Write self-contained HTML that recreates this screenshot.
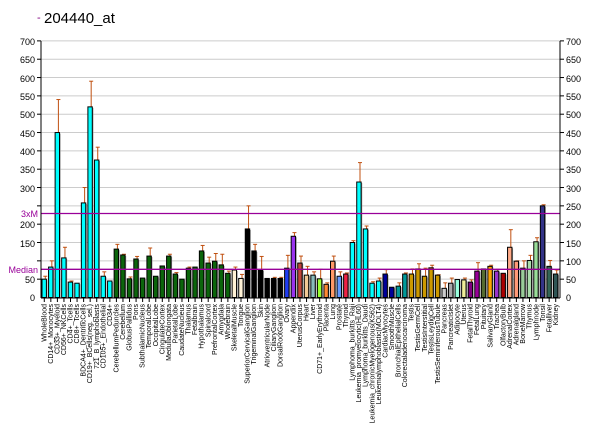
<!DOCTYPE html>
<html><head><meta charset="utf-8"><style>
html,body{margin:0;padding:0;background:#fff;}
svg{display:block;font-family:"Liberation Sans",sans-serif;}
.yl{font-size:9px;fill:#000;}
</style></head><body>
<svg id="s" width="600" height="434" viewBox="0 0 600 434" xmlns="http://www.w3.org/2000/svg" style="position:absolute;left:0;top:0">
<rect width="600" height="434" fill="#fff"/>
<text x="37" y="21" font-size="11" fill="#800080">-</text>
<text x="44" y="23" font-size="15" fill="#000">204440_at</text>
<g id="grid"></g>
<g id="bars"></g>
<line x1="41" y1="213.5" x2="560" y2="213.5" stroke="#990099" stroke-width="1.3"/>
<line x1="41" y1="269.3" x2="560" y2="269.3" stroke="#990099" stroke-width="1.3"/>
<line x1="41" y1="41" x2="41" y2="298" stroke="#000"/>
<line x1="560" y1="41" x2="560" y2="298" stroke="#000"/>
<line x1="41" y1="298" x2="560" y2="298" stroke="#000"/>
<g class="yl" text-anchor="end">
<text x="35" y="45">700</text><text x="35" y="63">650</text><text x="35" y="82">600</text><text x="35" y="100">550</text><text x="35" y="118">500</text><text x="35" y="137">450</text><text x="35" y="155">400</text><text x="35" y="173">350</text><text x="35" y="192">300</text><text x="35" y="228">200</text><text x="35" y="247">150</text><text x="35" y="283">50</text><text x="35" y="301">0</text>
</g>
<text x="38" y="217" font-size="9" fill="#990099" text-anchor="end">3xM</text>
<text x="38" y="273" font-size="9" fill="#990099" text-anchor="end">Median</text>
<g class="yl">
<text x="566" y="45">700</text><text x="566" y="63">650</text><text x="566" y="82">600</text><text x="566" y="100">550</text><text x="566" y="118">500</text><text x="566" y="137">450</text><text x="566" y="155">400</text><text x="566" y="173">350</text><text x="566" y="192">300</text><text x="566" y="210">250</text><text x="566" y="228">200</text><text x="566" y="247">150</text><text x="566" y="265">100</text><text x="566" y="283">50</text><text x="566" y="301">0</text>
</g>
</svg>
<script>
(function(){
var v=[50,83,450,108,42,39,258,520,375,58,45,132,116,51,105,53,113,58,86,113,64,50,80,83,127,94,99,89,66,75,52,187,127,75,52,52,52,80,167,94,61,61,51,36,99,58,64,150,315,187,39,45,64,28,31,64,64,78,58,81,61,25,39,49,48,42,72,78,85,72,66,137,99,80,101,152,250,85,64];
var e=[58,100,540,137,45,0,300,590,410,70,0,145,118,56,112,0,135,0,0,118,68,0,83,0,142,110,120,118,72,83,63,250,145,112,0,55,55,115,177,113,85,70,77,40,113,70,67,155,368,195,43,53,76,0,40,67,78,92,80,88,62,40,53,0,53,48,95,0,88,77,0,185,100,100,115,163,253,101,75];
var c=[],i;
for(i=0;i<11;i++)c.push("#00ffff");
for(i=0;i<18;i++)c.push("#0b650b");
c=c.concat(["#fff2d6","#fff2d6","#000","#000","#000","#000","#000","#000","#1f3cf0","#9933ee","#c0453a","#f2c996","#88bbbb","#99ff33","#ff8833","#ff9966","#6699ff","#ee2244","#00ffff","#00ffff","#00ffff","#00ffff","#00ffff","#000099","#000099","#009999","#009999","#cc9900","#cc9900","#cc9900","#cc9900","#cc9900","#cccccc","#aaaaaa","#99ffdd","#eeee99","#800080","#990099","#556b2f","#ffa500","#9933cc","#aa0000","#ffaa88","#ff9977","#99cc99","#aaddaa","#99dd99","#333388","#336655","#2f5555"]);
var ns="http://www.w3.org/2000/svg";
function el(t,a,p){var n=document.createElementNS(ns,t);for(var k in a)n.setAttribute(k,a[k]);p.appendChild(n);return n;}
var g=document.getElementById("grid");
function Y(val){return 297.5-val*0.3666;}
for(var k=1;k<=14;k++){var y=Y(k*50);el("line",{x1:41,x2:560,y1:y,y2:y,stroke:"#cccccc","stroke-width":1},g);
el("line",{x1:37,x2:41,y1:y,y2:y,stroke:"#000"},g);el("line",{x1:560,x2:564,y1:y,y2:y,stroke:"#000"},g);}
var b=document.getElementById("bars");
var w=518/79;
for(i=0;i<79;i++){
 var x0=41+i*w, cx=x0+w/2, ty=Y(v[i]);
 el("rect",{x:x0+2.5,y:ty+1,width:4,height:297.5-ty-1,fill:"#999"},b);
 if(e[i]>v[i]){var et=Y(e[i]);
  el("line",{x1:cx+1,x2:cx+1,y1:et,y2:ty,stroke:"#c05010","stroke-width":1},b);
  el("line",{x1:cx-1,x2:cx+3,y1:et,y2:et,stroke:"#c05010","stroke-width":1},b);}
 el("rect",{x:x0+1,y:ty,width:4.4,height:297.5-ty,fill:c[i],stroke:"#000","stroke-width":1},b);
 el("line",{x1:cx,x2:cx,y1:298,y2:302,stroke:"#000"},b);
}
})();
</script>
<div style="position:absolute;left:0;top:0;width:600px;height:434px;pointer-events:none">
<svg width="600" height="434" style="position:absolute;left:0;top:0" font-family="Liberation Sans, sans-serif" font-size="7" text-anchor="end">
<text transform="translate(46.3,304) rotate(-90)">WholeBlood</text>
<text transform="translate(52.8,304) rotate(-90)">CD14+_Monocytes</text>
<text transform="translate(59.4,304) rotate(-90)">CD33+_Myeloid</text>
<text transform="translate(66,304) rotate(-90)">CD56+_NKCells</text>
<text transform="translate(72.5,304) rotate(-90)">CD4+_Tcells</text>
<text transform="translate(79.1,304) rotate(-90)">CD8+_Tcells</text>
<text transform="translate(85.6,304) rotate(-90)">BDCA4+_DentriticCells</text>
<text transform="translate(92.2,304) rotate(-90)">CD19+_BCells(neg._sel.)</text>
<text transform="translate(98.8,304) rotate(-90)">721_B_lymphoblasts</text>
<text transform="translate(105.3,304) rotate(-90)">CD105+_Endothelial</text>
<text transform="translate(111.9,304) rotate(-90)">CD34+</text>
<text transform="translate(118.4,304) rotate(-90)">CerebellumPeduncles</text>
<text transform="translate(125,304) rotate(-90)">Cerebellum</text>
<text transform="translate(131.6,304) rotate(-90)">GlobusPallidus</text>
<text transform="translate(138.1,304) rotate(-90)">Pons</text>
<text transform="translate(144.7,304) rotate(-90)">SubthalamicNucleus</text>
<text transform="translate(151.2,304) rotate(-90)">TemporalLobe</text>
<text transform="translate(157.8,304) rotate(-90)">OccipitalLobe</text>
<text transform="translate(164.4,304) rotate(-90)">CingulateCortex</text>
<text transform="translate(170.9,304) rotate(-90)">MedullaOblongata</text>
<text transform="translate(177.5,304) rotate(-90)">ParietalLobe</text>
<text transform="translate(184,304) rotate(-90)">CaudateNucleus</text>
<text transform="translate(190.6,304) rotate(-90)">Thalamus</text>
<text transform="translate(197.2,304) rotate(-90)">Fetalbrain</text>
<text transform="translate(203.7,304) rotate(-90)">Hypothalamus</text>
<text transform="translate(210.3,304) rotate(-90)">Spinalcord</text>
<text transform="translate(216.8,304) rotate(-90)">PrefrontalCortex</text>
<text transform="translate(223.4,304) rotate(-90)">Amygdala</text>
<text transform="translate(230,304) rotate(-90)">Wholebrain</text>
<text transform="translate(236.5,304) rotate(-90)">SkeletalMuscle</text>
<text transform="translate(243.1,304) rotate(-90)">Tongue</text>
<text transform="translate(249.6,304) rotate(-90)">SuperiorCervicalGanglion</text>
<text transform="translate(256.2,304) rotate(-90)">TrigeminalGanglion</text>
<text transform="translate(262.8,304) rotate(-90)">Skin</text>
<text transform="translate(269.3,304) rotate(-90)">AtrioventricularNode</text>
<text transform="translate(275.9,304) rotate(-90)">CiliaryGanglion</text>
<text transform="translate(282.4,304) rotate(-90)">DorsalRootGanglion</text>
<text transform="translate(289,304) rotate(-90)">Ovary</text>
<text transform="translate(295.6,304) rotate(-90)">Appendix</text>
<text transform="translate(302.1,304) rotate(-90)">UterusCorpus</text>
<text transform="translate(308.7,304) rotate(-90)">Heart</text>
<text transform="translate(315.2,304) rotate(-90)">Liver</text>
<text transform="translate(321.8,304) rotate(-90)">CD71+_EarlyErythroid</text>
<text transform="translate(328.4,304) rotate(-90)">Placenta</text>
<text transform="translate(334.9,304) rotate(-90)">Lung</text>
<text transform="translate(341.5,304) rotate(-90)">Prostate</text>
<text transform="translate(348,304) rotate(-90)">Thyroid</text>
<text transform="translate(354.6,304) rotate(-90)">Lymphoma_burkitts_Raji</text>
<text transform="translate(361.2,304) rotate(-90)">Leukemia_promyelocytic(HL60)</text>
<text transform="translate(367.7,304) rotate(-90)">Lymphoma_burkitts_Daudi</text>
<text transform="translate(374.3,304) rotate(-90)">Leukemia_chronicMyelogenous(K562)</text>
<text transform="translate(380.8,304) rotate(-90)">Leukemialymphoblastic(MOLT4)</text>
<text transform="translate(387.4,304) rotate(-90)">CardiacMyocytes</text>
<text transform="translate(394,304) rotate(-90)">SmoothMuscle</text>
<text transform="translate(400.5,304) rotate(-90)">BronchialEpithelialCells</text>
<text transform="translate(407.1,304) rotate(-90)">Colorectaladenocarcinoma</text>
<text transform="translate(413.6,304) rotate(-90)">Testis</text>
<text transform="translate(420.2,304) rotate(-90)">TestisGermCell</text>
<text transform="translate(426.8,304) rotate(-90)">TestisInterstitial</text>
<text transform="translate(433.3,304) rotate(-90)">TestisLeydigCell</text>
<text transform="translate(439.9,304) rotate(-90)">TestisSeminiferousTubule</text>
<text transform="translate(446.4,304) rotate(-90)">Pancreas</text>
<text transform="translate(453,304) rotate(-90)">PancreaticIslet</text>
<text transform="translate(459.6,304) rotate(-90)">Adipocyte</text>
<text transform="translate(466.1,304) rotate(-90)">Uterus</text>
<text transform="translate(472.7,304) rotate(-90)">FetalThyroid</text>
<text transform="translate(479.2,304) rotate(-90)">FetalLung</text>
<text transform="translate(485.8,304) rotate(-90)">Pituitary</text>
<text transform="translate(492.4,304) rotate(-90)">SalivaryGland</text>
<text transform="translate(498.9,304) rotate(-90)">Trachea</text>
<text transform="translate(505.5,304) rotate(-90)">OlfactoryBulb</text>
<text transform="translate(512,304) rotate(-90)">AdrenalCortex</text>
<text transform="translate(518.6,304) rotate(-90)">Adrenalgland</text>
<text transform="translate(525.2,304) rotate(-90)">BoneMarrow</text>
<text transform="translate(531.7,304) rotate(-90)">Thymus</text>
<text transform="translate(538.3,304) rotate(-90)">Lymphnode</text>
<text transform="translate(544.8,304) rotate(-90)">Tonsil</text>
<text transform="translate(551.4,304) rotate(-90)">Fetalliver</text>
<text transform="translate(558,304) rotate(-90)">Kidney</text>
</svg>
</div>
</body></html>
